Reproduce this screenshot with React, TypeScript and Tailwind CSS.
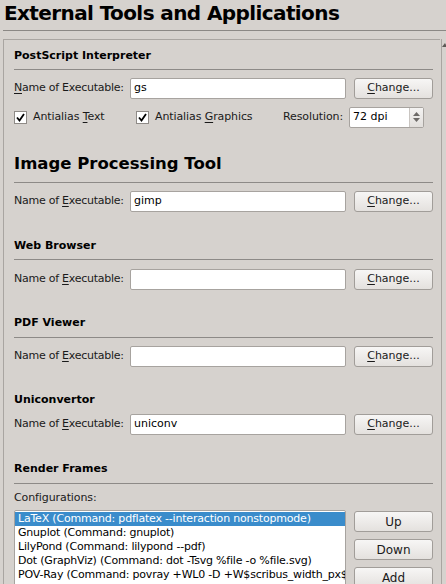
import React from 'react';

const font = { fontFamily: '"DejaVu Sans", "Liberation Sans", sans-serif' };

function U({ children }: { children: React.ReactNode }) {
  return <span className="underline underline-offset-2">{children}</span>;
}

function Field({ value, accel = 'E' }: { value: string; accel?: 'N' | 'E' }) {
  return (
    <div className="flex h-[21px] items-center">
      <div className="w-[116px] shrink-0 text-[11px] tracking-[-0.25px] text-[#1a1a1a]">
        {accel === 'N' ? (
          <>
            <U>N</U>ame of Executable:
          </>
        ) : (
          <>
            Name of <U>E</U>xecutable:
          </>
        )}
      </div>
      <div className="flex h-[21px] w-[216px] items-center rounded-[2px] border border-[#a7a39f] bg-white px-[3px] text-[11px] text-black">
        {value}
      </div>
      <ChangeBtn />
    </div>
  );
}

function ChangeBtn() {
  return (
    <button className="ml-[8px] flex h-[21px] w-[79px] items-center justify-center rounded-[3px] border border-[#a19d99] bg-gradient-to-b from-[#f7f6f5] to-[#e4e1de] text-[11px] text-[#1a1a1a]">
      <U>C</U>hange...
    </button>
  );
}

function Check({ children, w }: { children: React.ReactNode; w: string }) {
  return (
    <div className={`${w} flex items-center gap-[6px]`}>
      <div className="flex h-[13px] w-[13px] items-center justify-center border border-[#8f8b87] bg-white">
        <svg width="9" height="9" viewBox="0 0 9 9">
          <path d="M1 4.5 L3.5 7.5 L8 1" fill="none" stroke="#000" strokeWidth="1.8" />
        </svg>
      </div>
      <span className="text-[11px] tracking-[-0.1px] text-[#1a1a1a]">{children}</span>
    </div>
  );
}

function Header({ title, pt, big }: { title: string; pt: string; big?: boolean }) {
  return (
    <div className={pt}>
      <div
        className={
          big
            ? 'text-[16.5px] font-bold leading-[20px] text-black'
            : 'text-[11px] font-bold leading-[14px] text-black'
        }
      >
        {title}
      </div>
    </div>
  );
}

function Rule() {
  return <div className="h-px w-[419px] bg-[#8d8a87]" />;
}

function SideBtn({ label, mt }: { label: string; mt: string }) {
  return (
    <button
      className={`${mt} flex h-[21px] w-[79px] items-center justify-center rounded-[3px] border border-[#a19d99] bg-gradient-to-b from-[#f7f6f5] to-[#e4e1de] text-[12px] text-[#1a1a1a]`}
    >
      {label}
    </button>
  );
}

const renderItems = [
  'LaTeX (Command: pdflatex --interaction nonstopmode)',
  'Gnuplot (Command: gnuplot)',
  'LilyPond (Command: lilypond --pdf)',
  'Dot (GraphViz) (Command: dot -Tsvg %file -o %file.svg)',
  'POV-Ray (Command: povray +WL0 -D +W$scribus_width_px$ +H$scribus_height_px$ %file)',
];

export default function App() {
  return (
    <div className="relative h-[584px] w-[446px] overflow-hidden bg-[#d6d2ce]" style={font}>
      {/* title */}
      <div className="h-[30px] pl-[4px] pt-[1px] text-[20px] font-bold leading-[24px] tracking-[-0.6px] text-black">
        External Tools and Applications
      </div>
      <div className="ml-[3px] h-px bg-[#8b8885]" />

      {/* scroll area */}
      <div className="mt-[8px] ml-[3px] flex">
        <div className="h-[600px] w-[438px] border-l border-t border-[#a9a5a1] pl-[10px]">
          <Header title="PostScript Interpreter" pt="pt-[9px] h-[29px]" />
          <Rule />
          <div className="mt-[8px]">
            <Field value="gs" accel="N" />
          </div>
          <div className="mt-[8px] flex h-[20px] items-center">
            <Check w="w-[122px]">
              Antialias <U>T</U>ext
            </Check>
            <Check w="w-[147px]">
              Antialias <U>G</U>raphics
            </Check>
            <span className="w-[66px] text-[11px] tracking-[-0.1px] text-[#1a1a1a]">Resolution:</span>
            <div className="flex h-[21px] w-[75px] items-center rounded-[2px] border border-[#a7a39f] bg-white">
              <span className="flex-1 pl-[3px] text-[11px] text-black">72 dpi</span>
              <div className="flex h-full w-[14px] flex-col items-center justify-center gap-[2px] border-l border-[#c9c5c1] bg-gradient-to-b from-[#f4f3f2] to-[#e2dfdc]">
                <svg width="7" height="4" viewBox="0 0 7 4">
                  <path d="M0 4 L3.5 0 L7 4 Z" fill="#6d6a67" />
                </svg>
                <svg width="7" height="4" viewBox="0 0 7 4">
                  <path d="M0 0 L3.5 4 L7 0 Z" fill="#6d6a67" />
                </svg>
              </div>
            </div>
          </div>

          <Header title="Image Processing Tool" pt="pt-[27px] h-[55px]" big />
          <Rule />
          <div className="mt-[8px]">
            <Field value="gimp" />
          </div>

          <Header title="Web Browser" pt="pt-[27px] h-[47px]" />
          <Rule />
          <div className="mt-[9px]">
            <Field value="" />
          </div>

          <Header title="PDF Viewer" pt="pt-[26px] h-[47px]" />
          <Rule />
          <div className="mt-[8px]">
            <Field value="" />
          </div>

          <Header title="Uniconvertor" pt="pt-[26px] h-[47px]" />
          <Field value="uniconv" />

          <Header title="Render Frames" pt="pt-[27px] h-[48px]" />
          <Rule />
          <div className="mt-[7px] h-[14px] text-[11px] leading-[14px] tracking-[-0.1px] text-[#1a1a1a]">
            Configurations:
          </div>
          <div className="mt-[5px] flex">
            <div className="h-[90px] w-[332px] overflow-hidden rounded-[2px] border border-[#a7a39f] bg-white pt-px">
              {renderItems.map((item, i) => (
                <div
                  key={item}
                  className={`h-[14px] overflow-hidden whitespace-nowrap pl-[3px] text-[11px] leading-[14px] tracking-[-0.2px] ${
                    i === 0 ? 'bg-[#3a8ccb] text-white' : 'text-black'
                  }`}
                >
                  {item}
                </div>
              ))}
            </div>
            <div className="ml-[8px] flex flex-col">
              <SideBtn label="Up" mt="mt-[1px]" />
              <SideBtn label="Down" mt="mt-[7px]" />
              <SideBtn label="Add" mt="mt-[7px]" />
            </div>
          </div>
        </div>
        {/* scrollbar */}
        <div className="ml-px w-[5px] border-l border-[#a9a5a1] bg-[#d6d2ce] pt-[4px]">
          <svg width="5" height="4" viewBox="0 0 5 4">
            <path d="M0 4 L3 0 L5 4 Z" fill="#5c5956" />
          </svg>
        </div>
      </div>
    </div>
  );
}
